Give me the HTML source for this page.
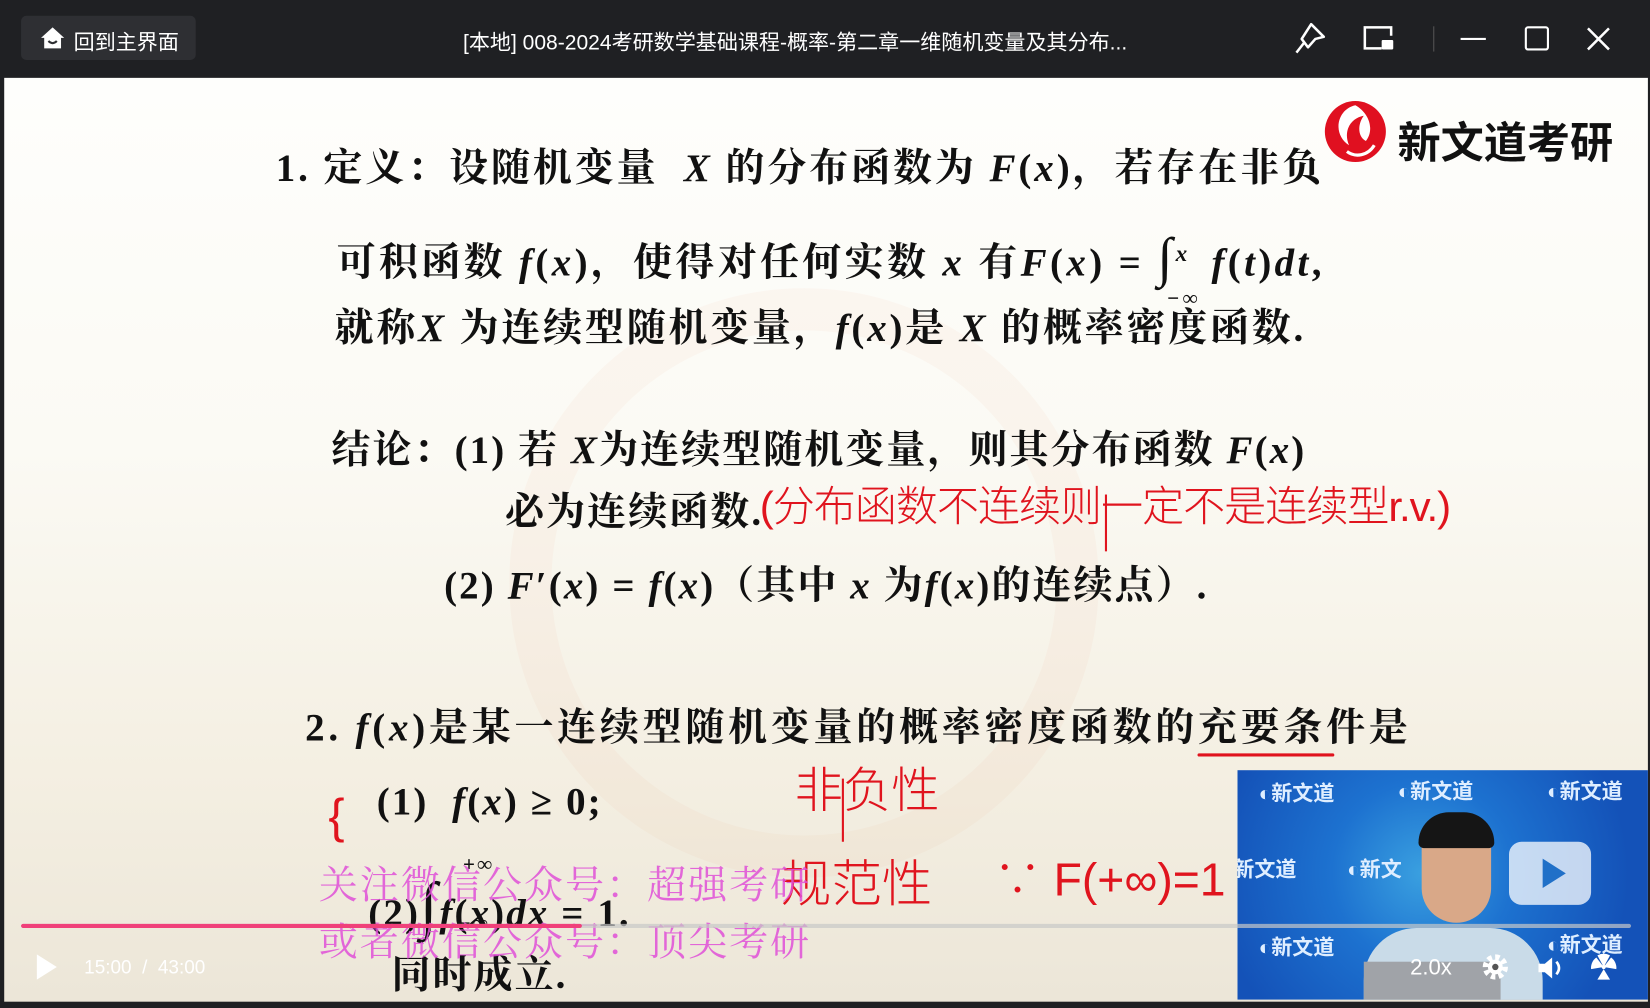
<!DOCTYPE html>
<html><head><meta charset="utf-8"><style>
html,body{margin:0;padding:0;width:1650px;height:1008px;overflow:hidden;background:#111;}
#w{position:absolute;left:0;top:0;width:1568px;height:958px;transform:scale(1.05230,1.05219);transform-origin:0 0;background:#1f2023;overflow:hidden;}
.t{position:absolute;white-space:nowrap;font-family:"Liberation Serif","Noto Serif CJK SC",serif;color:#111;font-size:37px;line-height:1;font-weight:bold;letter-spacing:2px;}
.i{font-style:italic;}
.hw{position:absolute;white-space:nowrap;font-family:"Liberation Sans","Noto Sans CJK SC",sans-serif;color:#e0141e;font-size:40px;line-height:1;font-weight:300;}
.wm{position:absolute;white-space:nowrap;font-family:"Liberation Serif","Noto Serif CJK SC",serif;color:#e050d8;opacity:.85;font-size:37px;line-height:1;}
.s{font-family:"Liberation Sans","Noto Sans CJK SC",sans-serif;}
</style></head><body><div id="w">
<div style="position:absolute;left:0;top:0;width:1568px;height:72px;background:#1f2023;"></div>
<div style="position:absolute;left:20px;top:15px;width:166px;height:42px;background:#2e2f33;border-radius:5px;"></div>
<svg style="position:absolute;left:37px;top:24px" width="26" height="24" viewBox="0 0 26 24"><path d="M13 2 L24 12 H21 V22 H5 V12 H2 Z" fill="#fff"/><path d="M9 15 Q13 19 17 15" stroke="#2e2f33" stroke-width="2" fill="none"/></svg>
<div class="s" style="position:absolute;left:70px;top:24px;color:#fff;font-size:20px;">回到主界面</div>
<div class="s" style="position:absolute;left:440px;top:24px;color:#fff;font-size:20px;white-space:nowrap;">[本地] 008-2024考研数学基础课程-概率-第二章一维随机变量及其分布...</div>
<svg style="position:absolute;left:1228px;top:20px" width="36" height="34" viewBox="0 0 36 34" fill="none" stroke="#fff" stroke-width="2.4" stroke-linejoin="round"><path d="M18 3 L30 15 L22 17 L15 25 L9 17 Z"/><path d="M11 21 L4 30"/></svg>
<svg style="position:absolute;left:1293px;top:22px" width="36" height="30" viewBox="0 0 36 30" fill="none" stroke="#fff" stroke-width="2.4"><path d="M20 24 H4 V4 H29 V12"/><rect x="20" y="16" width="11" height="9" fill="#fff" stroke="none" rx="1"/></svg>
<div style="position:absolute;left:1362px;top:25px;width:1px;height:24px;background:#555;"></div>
<div style="position:absolute;left:1388px;top:36px;width:24px;height:2.4px;background:#fff;"></div>
<div style="position:absolute;left:1449px;top:25px;width:19px;height:19px;border:2.4px solid #fff;border-radius:3px;"></div>
<svg style="position:absolute;left:1507px;top:25px" width="24" height="24" viewBox="0 0 24 24" stroke="#fff" stroke-width="2.4"><path d="M2 2 L22 22 M22 2 L2 22"/></svg>
<div style="position:absolute;left:4px;top:74px;width:1562px;height:878px;background:linear-gradient(#fefefc,#fbfaf4 40%,#f4efe2 75%,#ece6d8);overflow:hidden;">
<div style="position:absolute;left:480px;top:200px;width:480px;height:480px;border-radius:50%;border:40px solid rgba(230,150,120,.06);"></div>
</div>
<svg style="position:absolute;left:1256px;top:94px" width="64" height="62" viewBox="0 0 64 62"><circle cx="32" cy="31" r="29" fill="#e01020"/><path d="M32 6 C14 10 10 34 26 44 C20 30 28 18 40 16 C34 24 34 36 42 40 C50 30 46 14 32 6Z" fill="#fff"/><path d="M24 50 C32 56 44 54 50 44" stroke="#fff" stroke-width="3" fill="none"/></svg>
<div class="s" style="position:absolute;left:1328px;top:102px;font-size:41px;font-weight:bold;color:#111;">新文道考研</div>
<div class="t" style="left:262px;top:142px;letter-spacing:2.8px;">1.&nbsp;定义：设随机变量&nbsp; <span class="i">X</span> 的分布函数为 <span class="i">F</span>(<span class="i">x</span>)，若存在非负</div>
<div class="t" style="left:320px;top:220px;letter-spacing:3.2px;">可积函数 <span class="i">f</span>(<span class="i">x</span>)，使得对任何实数 <span class="i">x</span> 有<span class="i">F</span>(<span class="i">x</span>) = <span style="font-size:52px;font-weight:normal;">∫</span><span style="display:inline-block;width:34px;position:relative;"><span class="i" style="position:absolute;left:0px;top:-32px;font-size:22px;">x</span><span style="position:absolute;left:-8px;top:12px;font-size:20px;">−∞</span></span><span class="i">f</span>(<span class="i">t</span>)<span class="i">dt</span>,</div>
<div class="t" style="left:318px;top:294px;letter-spacing:2.7px;">就称<span class="i">X</span> 为连续型随机变量，<span class="i">f</span>(<span class="i">x</span>)是 <span class="i">X</span> 的概率密度函数.</div>
<div class="t" style="left:315px;top:410px;">结论：(1) 若 <span class="i">X</span>为连续型随机变量，则其分布函数 <span class="i">F</span>(<span class="i">x</span>)</div>
<div class="t" style="left:480px;top:469px;">必为连续函数.</div>
<div class="hw" style="left:722px;top:462px;letter-spacing:-1px;font-size:40px;">(分布函数不连续则一定不是连续型r.v.)</div>
<div style="position:absolute;left:1050px;top:470px;width:2px;height:54px;background:#e0141e;"></div>
<div class="t" style="left:422px;top:539px;">(2) <span class="i">F</span>′(<span class="i">x</span>) = <span class="i">f</span>(<span class="i">x</span>)（其中 <span class="i">x</span> 为<span class="i">f</span>(<span class="i">x</span>)的连续点）.</div>
<div class="t" style="left:290px;top:674px;letter-spacing:3.6px;">2.&nbsp;<span class="i">f</span>(<span class="i">x</span>)是某一连续型随机变量的概率密度函数的充要条件是</div>
<div style="position:absolute;left:1138px;top:716px;width:130px;height:3px;background:#e0141e;border-radius:2px;"></div>
<div class="t" style="left:358px;top:744px;">(1)&nbsp; <span class="i">f</span>(<span class="i">x</span>) ≥ 0;</div>
<div class="hw" style="left:755px;top:728px;font-size:46px;">非负性</div>
<div style="position:absolute;left:800px;top:740px;width:2px;height:60px;background:#e0141e;"></div>
<div class="hw" style="left:312px;top:752px;font-size:46px;">{</div>
<div class="t" style="left:350px;top:830px;">(2)<span style="font-size:60px;font-weight:normal;">∫</span><span class="i">f</span>(<span class="i">x</span>)<span class="i">dx</span> = 1.</div>
<div class="t" style="left:440px;top:812px;font-size:20px;">+∞</div>
<div class="t" style="left:436px;top:868px;font-size:20px;">−∞</div>
<div class="hw" style="left:742px;top:818px;font-size:48px;">规范性</div>
<div class="hw" style="left:945px;top:815px;font-size:44px;">∵ F(+∞)=1</div>
<div class="t" style="left:372px;top:909px;">同时成立.</div>
<div class="wm" style="left:303px;top:824px;letter-spacing:2px;">关注微信公众号：超强考研</div>
<div class="wm" style="left:303px;top:878px;letter-spacing:2px;">或者微信公众号：顶尖考研</div>
<div style="position:absolute;left:1176px;top:732px;width:390px;height:218px;background:radial-gradient(circle at 45% 45%,#3aa0e0 0,#1d72d0 35%,#1452b8 80%);overflow:hidden;">
<div class="s" style="position:absolute;left:20px;top:6px;color:#dfeeff;font-size:20px;font-weight:bold;">◐新文道</div>
<div class="s" style="position:absolute;left:152px;top:4px;color:#dfeeff;font-size:20px;font-weight:bold;">◐新文道</div>
<div class="s" style="position:absolute;left:294px;top:4px;color:#dfeeff;font-size:20px;font-weight:bold;">◐新文道</div>
<div class="s" style="position:absolute;left:-4px;top:78px;color:#dfeeff;font-size:20px;font-weight:bold;">新文道</div>
<div class="s" style="position:absolute;left:104px;top:78px;color:#dfeeff;font-size:20px;font-weight:bold;">◐新文</div>
<div class="s" style="position:absolute;left:20px;top:152px;color:#dfeeff;font-size:20px;font-weight:bold;">◐新文道</div>
<div class="s" style="position:absolute;left:294px;top:150px;color:#dfeeff;font-size:20px;font-weight:bold;">◐新文道</div>
<div style="position:absolute;left:120px;top:150px;width:170px;height:90px;background:#c9dbe8;border-radius:50px 50px 0 0;"></div>
<div style="position:absolute;left:175px;top:45px;width:66px;height:100px;background:#d9a888;border-radius:30px 30px 34px 34px;"></div>
<div style="position:absolute;left:172px;top:40px;width:72px;height:34px;background:#151515;border-radius:34px 34px 6px 6px;"></div>
<div style="position:absolute;left:120px;top:182px;width:130px;height:40px;background:#a0a3a8;"></div>
<div style="position:absolute;left:258px;top:68px;width:78px;height:60px;background:rgba(255,255,255,.75);border-radius:12px;"></div>
<svg style="position:absolute;left:286px;top:82px" width="28" height="32"><path d="M4 2 L26 16 L4 30Z" fill="#2070c8"/></svg>
</div>
<div style="position:absolute;left:20px;top:878px;width:1530px;height:4px;background:rgba(200,200,200,.7);border-radius:2px;"></div>
<div style="position:absolute;left:20px;top:878px;width:533px;height:4px;background:#f0407a;border-radius:2px;"></div>
<svg style="position:absolute;left:32px;top:905px" width="24" height="28"><path d="M3 2 L22 14 L3 26Z" fill="#fff"/></svg>
<div class="s" style="position:absolute;left:80px;top:909px;color:#fff;font-size:18px;">15:00&nbsp; /&nbsp; 43:00</div>
<div class="s" style="position:absolute;left:1340px;top:908px;color:#fff;font-size:21px;">2.0x</div>
<svg style="position:absolute;left:1408px;top:906px" width="26" height="26" viewBox="0 0 26 26"><circle cx="13" cy="13" r="9" fill="none" stroke="#fff" stroke-width="6" stroke-dasharray="4 3"/><circle cx="13" cy="13" r="7" fill="#fff"/><circle cx="13" cy="13" r="3" fill="#555"/></svg>
<svg style="position:absolute;left:1460px;top:907px" width="28" height="26" viewBox="0 0 28 26"><path d="M2 9 H8 L15 3 V23 L8 17 H2Z" fill="#fff"/><path d="M19 7 Q24 13 19 19" stroke="#fff" stroke-width="2.5" fill="none"/></svg>
<svg style="position:absolute;left:1510px;top:905px" width="28" height="28" viewBox="0 0 28 28" fill="#fff"><path d="M14 14 L8 3 A12 12 0 0 1 20 3Z"/><path d="M14 14 L2 16 A12 12 0 0 1 7 5Z"/><path d="M14 14 L26 16 A12 12 0 0 0 21 5Z"/><path d="M14 16 L8 26 H20Z"/><circle cx="14" cy="14" r="2"/></svg>
</div></body></html>
